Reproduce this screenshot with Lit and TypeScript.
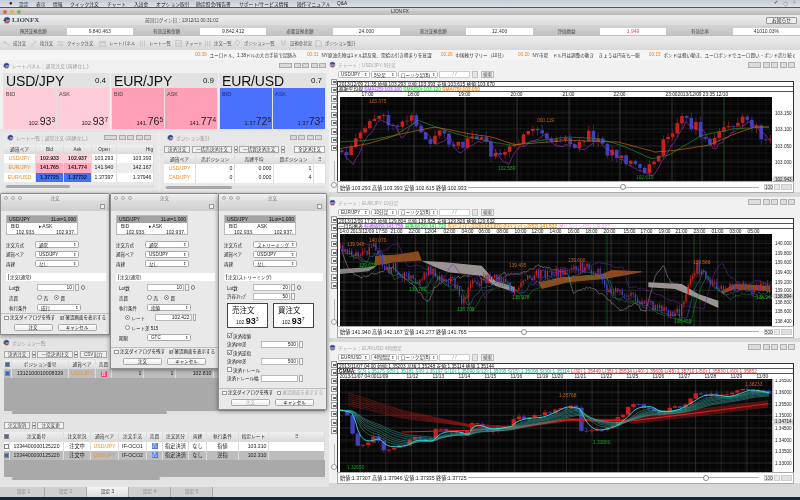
import { LitElement, html, css, svg, nothing } from "lit";
import { customElement } from "lit/decorators.js";

type P = [number, number];
function lerp(pts: P[], x: number): number {
  if (x <= pts[0][0]) return pts[0][1];
  for (let i = 1; i < pts.length; i++) {
    if (x <= pts[i][0]) {
      const [a, b] = pts[i - 1], [c, d] = pts[i];
      return b + ((d - b) * (x - a)) / (c - a);
    }
  }
  return pts[pts.length - 1][1];
}
function rng(seed: number) {
  let s = seed;
  return () => {
    s = (s * 1664525 + 1013904223) >>> 0;
    return s / 4294967296;
  };
}
const conv = (pts: P[], ox: number, oy: number): P[] => pts.map(([x, y]) => [(x - ox) / 3, (y - oy) / 3]);
function line(pts: P[], step: number, noise: number, r: () => number, w: number): string {
  const out: string[] = [];
  const from = pts[0][0], to = Math.min(pts[pts.length - 1][0], w);
  for (let x = from; x <= to; x += step) out.push(`${x.toFixed(1)},${(lerp(pts, x) + (r() - 0.5) * noise).toFixed(1)}`);
  return out.join(" ");
}
function candles(path: P[], w: number, step: number, cw: number, amp: number, wick: number, seed: number) {
  const r = rng(seed);
  let prev = lerp(path, 0);
  const items: unknown[] = [];
  for (let x = 0; x < w; x += step) {
    const close = lerp(path, x + step) + (r() - 0.5) * amp;
    const open = prev;
    const up = close < open;
    const top = Math.min(open, close), bot = Math.max(open, close);
    const col = up ? "#c82020" : "#4040bc";
    items.push(svg`<line x1=${x + cw / 2} x2=${x + cw / 2} y1=${top - r() * wick} y2=${bot + r() * wick} stroke=${col} stroke-width="0.6"/><rect x=${x} y=${top} width=${cw} height=${Math.max(bot - top, 0.8)} fill=${col}/>`);
    prev = close;
  }
  return items;
}

interface ChartSpec {
  h: number;
  info: string;
  ind: unknown;
  dates: [number, string][];
  axis: [number, string][];
  tag: [number, string];
  vlines: [number, string][];
  body: () => unknown;
  ohlc: string;
  knob: number;
  depth: string;
  pair: string;
  tf: string;
  title: string;
  track: number;
}

const C1path = conv([[15,195],[45,225],[70,170],[120,90],[170,110],[190,150],[230,90],[260,130],[295,170],[330,140],[360,195],[400,165],[450,150],[480,205],[510,225],[530,185],[570,160],[620,135],[650,170],[700,165],[740,185],[770,150],[800,175],[840,205],[890,240],[940,260],[980,200],[1040,100],[1100,130],[1125,180],[1190,120],[1230,100],[1270,130],[1305,165]], 15, 35);
const C1g = conv([[15,170],[100,165],[180,150],[250,105],[330,135],[400,155],[470,170],[530,180],[620,165],[700,155],[790,160],[860,180],[950,220],[1000,210],[1100,150],[1200,130],[1305,125]], 15, 35);
const C1o = conv([[15,190],[100,175],[200,145],[300,125],[400,145],[470,155],[540,178],[640,170],[700,165],[850,170],[960,200],[1020,195],[1120,180],[1200,145],[1260,125],[1305,125]], 15, 35);

const t = (x: number, y: number, s: string, c: string) => svg`<text x=${x} y=${y} fill=${c} class="lbl">${s}</text>`;

function chart1() {
  const r = rng(7);
  return svg`
    ${candles(C1path, 432, 4.66, 3.6, 11, 6, 11)}
    <polyline points=${line(C1path.map(([x, y]) => [x + 4, y + 4] as P), 3, 3, r, 432)} fill="none" stroke="#a030d0" stroke-width=".6"/>
    <polyline points=${line(C1g, 3, .3, r, 432)} fill="none" stroke="#1f8f2a" stroke-width=".7"/>
    <polyline points=${line(C1o, 3, .3, r, 432)} fill="none" stroke="#c0641c" stroke-width=".7"/>
    ${t(29, 6, "103.375", "#c8641e")}${t(197, 25, "000.119", "#c8641e")}${t(158, 73, "102.589", "#12a020")}${t(296, 82, "102.619", "#12a020")}`;
}
const C2path = conv([[15,160],[50,170],[80,185],[100,170],[125,155],[150,230],[180,220],[210,240],[260,270],[285,220],[320,260],[360,260],[385,325],[420,270],[470,250],[510,255],[540,290],[570,260],[620,235],[680,240],[730,215],[800,235],[815,290],[870,300],[920,320],[985,345],[1040,360],[1060,280],[1090,215],[1120,260],[1160,290],[1200,270],[1250,285],[1305,280]], 15, 120);
const C2w = conv([[15,160],[40,225],[70,250],[120,240],[170,220],[230,270],[280,325],[300,280],[330,260],[420,240],[470,270],[500,240],[560,240],[610,215],[700,240],[715,295],[760,280],[800,300],[860,350],[900,330],[930,355],[960,250],[985,215],[1010,270],[1060,280]], 15, 120);
const poly = (top: P[], bot: P[], fill: string, ox = 15, oy = 120) =>
  svg`<polygon points=${[...conv(top, ox, oy), ...conv(bot, ox, oy).reverse()].map((p) => p.join(",")).join(" ")} fill=${fill}/>`;
function chart2() {
  const r = rng(21);
  const shift = (dy: number, dx = 0) => C2path.map(([x, y]) => [x + dx, y + dy] as P);
  return svg`
    ${poly([[15,225],[100,220],[120,215]], [[15,240],[100,232],[120,220]], "#8a8280")}
    ${poly([[120,185],[180,182],[250,172],[260,198]], [[120,215],[180,205],[250,200],[260,200]], "#8a4a1c")}
    ${poly([[260,200],[330,205],[440,215],[480,260],[540,280]], [[290,215],[340,235],[440,245],[480,275],[540,295]], "#9a9290")}
    ${poly([[610,265],[680,250],[800,240],[830,228],[920,232]], [[620,285],[700,265],[810,255],[920,235]], "#8a4a1c")}
    ${poly([[940,265],[1040,270],[1090,300],[1150,320]], [[940,280],[1020,285],[1080,310],[1150,342]], "#9a9290")}
    ${poly([[1160,290],[1200,270],[1305,275]], [[1160,300],[1200,285],[1305,292]], "#8a4a1c")}
    <polyline points=${line(C2w, 1.6, 3, r, 432)} fill="none" stroke="#b89cb4" stroke-width=".5"/>
    ${candles(C2path, 432, 2.2, 1.3, 10, 4, 5)}
    <polyline points=${line(shift(5, 5), 2, 4, r, 432)} fill="none" stroke="#3a90d0" stroke-width=".4"/>
    <polyline points=${line(shift(9, 9), 3, 3, r, 432)} fill="none" stroke="#159030" stroke-width=".5"/>
    <polyline points=${line(shift(-4, 22), 3, 3, r, 432)} fill="none" stroke="#7028a8" stroke-width=".5"/>
    ${t(7, 12, "139.946", "#c8641e")}${t(29, 8, "140.070", "#c8641e")}${t(19, 33, "139.635", "#18b02a")}${t(69, 57, "139.786", "#18b02a")}${t(169, 33, "139.495", "#c8641e")}${t(172, 65, "138.978", "#18b02a")}${t(117, 77, "138.709", "#18b02a")}${t(228, 28, "139.600", "#c8641e")}${t(353, 30, "139.566", "#c8641e")}${t(334, 89, "138.455", "#18b02a")}${t(416, 65, "138.942", "#18b02a")}`;
}
const C3path = conv([[15,210],[50,220],[70,320],[130,290],[150,325],[210,315],[240,295],[290,305],[310,270],[370,275],[400,290],[410,240],[460,270],[530,255],[540,235],[620,230],[690,195],[740,210],[745,265],[780,275],[840,255],[880,215],[900,195],[950,200],[970,220],[1030,205],[1100,160],[1180,170],[1240,145],[1300,160]], 15, 116);
function ema(path: P[], n: number) {
  const a = 2 / (n + 1);
  let v = lerp(path, 0);
  const out: string[] = [];
  for (let x = 0; x < 432; x += 3) {
    v = v + a * (lerp(path, x) - v);
    out.push(`${x},${v.toFixed(1)}`);
  }
  return out.join(" ");
}
const C3r = conv([[15,170],[200,222],[400,255],[540,262],[700,238],[800,240],[900,240],[1050,222],[1310,190]], 15, 116);
function chart3() {
  const reds = [];
  for (let k = 0; k < 7; k++) {
    const off = k * 1.9 - 6;
    const pts: string[] = [];
    for (let x = 8; x < 432; x += 4) {
      const sp = Math.max(0.18, 1 - x / 150) * off * 1.15 + (x > 290 ? off * 0.35 : 0);
      pts.push(`${x},${(lerp(C3r, x) + sp).toFixed(1)}`);
    }
    reds.push(svg`<polyline points=${pts.join(" ")} fill="none" stroke="#a31c1c" stroke-width=".5"/>`);
  }
  const teal = [6, 8, 10, 12, 15, 18, 21].map((n) => svg`<polyline points=${ema(C3path, n * 1.4)} fill="none" stroke="#2f9a90" stroke-width=".55"/>`);
  return svg`
    ${candles(C3path, 432, 5.2, 4.4, 5, 3.5, 33)}
    ${reds}
    <polyline points=${conv([[200,275],[400,270],[540,262],[700,238],[800,240],[900,240],[1050,222],[1300,190]], 15, 116).map((p) => p.join(",")).join(" ")} fill="none" stroke="#e01818" stroke-width="1.1"/>
    ${teal}
    <polyline points=${ema(C3path, 4)} fill="none" stroke="#2ee0e0" stroke-width=".9"/>
    ${t(7, 90, "1.32650", "#12a020")}${t(219, 18, "1.35768", "#c8641e")}${t(253, 65, "1.33880", "#12a020")}${t(405, 7, "1.38233", "#c8641e")}`;
}

const SPECS: ChartSpec[] = [
  {
    h: 85, title: "チャート：USD/JPY 5分足", pair: "USD/JPY", tf: "5分足", track: 20,
    info: "2013/12/09 21:35 始値:103.293 高値:103.393 安値:103.615 終値:103.670",
    ind: html`<span>移動平均線</span> <span class="vio">SMA(25):103.100</span> <span class="grn">SMA(50):103.120</span> <span class="org">SMA(75):103.050</span>`,
    dates: [[22, "17:00"], [74, "18:00"], [125, "19:00"], [177, "20:00"], [229, "21:00"], [280, "22:00"], [332, "23:002013/12/09 23:35 12/10"]],
    axis: [[16, "103.150"], [32, "103.100"], [49, "103.050"], [65, "103.000"]], tag: [82, "102.943"],
    vlines: [[22, "#555"], [74, "#555"], [125, "#555"], [177, "#555"], [229, "#555"], [280, "#555"], [332, "#555"], [362, "#555"], [384, "#1f7a28"]],
    body: chart1, ohlc: "始値:103.293 高値:103.393 安値:102.615 終値:102.933", knob: 152, depth: "100",
  },
  {
    h: 92, title: "チャート：EUR/JPY 10分足", pair: "EUR/JPY", tf: "10分足", track: 20,
    info: "2013/12/09 17:20 始値:129.804 高値:139.825 安値:129.826 終値:129.632",
    ind: html`<span>一目均衡表</span> <span class="vio">転換線(9):141.756</span> <span class="grn">基準線(26):141.726</span> <span class="org">先行スパン1(26):141.870 先行スパン2(52):141.522</span> <span class="pnk">遅行スパン(26):139.227</span>`,
    dates: [[0, "14:0 2013/12/09 17:50"], [57, "21:00"], [75, "22:00"], [91, "12/04"], [110, "02:00"], [128, "04:00"], [145, "06:00"], [163, "08:00"], [181, "10:00"], [198, "12:00"], [216, "14:00"], [234, "16:00"], [252, "18:00"], [270, "20:00"], [290, "15:00"], [307, "17:00"], [325, "19:00"], [342, "21:00"], [360, "23:00"], [378, "01:00"], [396, "03:00"], [414, "05:00"]],
    axis: [[9.3, "140.000"], [19.3, "139.800"], [28, "139.600"], [38, "139.400"], [48, "139.200"], [56.6, "139.000"], [68, "138.800"], [77, "138.600"], [87, "138.400"]], tag: [62.3, "138.894"],
    vlines: [...Array.from({ length: 24 }, (_, i) => [i * 17.8 + 4, "#444"] as [number, string]), [87, "#1f7a28"], [267, "#1f7a28"], [354, "#1f7a28"]],
    body: chart2, ohlc: "始値:141.940 高値:142.167 安値:141.277 終値:141.765", knob: 53, depth: "500",
  },
  {
    h: 93, title: "チャート：EUR/USD 4時間足", pair: "EUR/USD", tf: "4時間足", track: 20,
    info: "2013/11/07 04:00 始値:1.35203 高値:1.35248 安値:1.35114 終値:1.35144",
    ind: html`<span class="b">GMMA:</span> <span class="tea">S(3):1.35175 S(5):1.35181 S(8):1.35197 S(10):1.35090 S(12):1.35095 S(15):1.35098 S(30):1.35114</span> <span class="red">L(30):1.35449 L(35):1.35534 L(40):1.35609 L(45):1.35710 L(50):1.35830 L(60):1.35852</span>`,
    dates: [[0, "2013/11/07 04:00"], [43, "11/09"], [73, "11/12"], [99, "11/13"], [125, "11/14"], [151, "11/15"], [177, "11/16"], [203, "11/19"], [218, "11/20"], [241, "11/21"], [267, "11/22"], [293, "11/25"], [319, "11/26"], [345, "11/27"], [371, "11/28"], [397, "11/29"], [423, "11/30"]],
    axis: [[1.5, "1.36500"], [13, "1.36000"], [25, "1.35500"], [36.5, "1.35000"], [49, "1.34500"], [61, "1.34000"], [72, "1.33500"], [84, "1.33000"]], tag: [42.7, "1.34714"],
    vlines: Array.from({ length: 17 }, (_, i) => [i * 25.8 + 20, "#3c3c3c"] as [number, string]),
    body: chart3, ohlc: "始値:1.37307 高値:1.37946 安値:1.37335 終値:1.37725", knob: 235, depth: "100",
  },
];

const logo = html`<svg class="globe" viewBox="0 0 10 10"><circle cx="5" cy="5" r="4" fill="#8b97b8"/><path d="M1 4c2-3 6-3 8 0-2 1-5 1-8 0z" fill="#2d4aa0"/><path d="M2 7c2 1 4 1 6-1l-1 3H3z" fill="#c23a3a"/><path d="M0 6l3-2 1 3z" fill="#3a3a3a"/></svg>`;
const winBtns = (wide = true) => html`<span class="wb">${wide ? html`<i class="w"></i>` : nothing}<i></i><i></i><i></i><i></i></span>`;
const sel = (v: string, cls = "") => html`<span class="sel ${cls}"><span>${v}</span><b>⇕</b></span>`;
const num = (v: string, cls = "") => html`<span class="num"><span class="inp ${cls}">${v}</span><b class="st"></b></span>`;

@customElement("fx-chart")
export class FxChart extends LitElement {
  static properties = { index: { type: Number } };
  index = 0;
  static styles = css`
    :host { display: flex; flex-direction: column; background: #f1f1f1; font-size: 4.8px; }
    .title { height: 10px; display: flex; align-items: center; gap: 2px; padding: 0 5px 0 0; color: #a8a8a8; font-size: 4.8px; }
    .globe { width: 7px; height: 7px; margin-left: 0; }
    .wb { margin-left: auto; display: flex; gap: 1.5px; }
    .wb i { width: 5px; height: 3.5px; background: #dcdcdc; border: .5px solid #b0b0b0; }
    .wb i.w { width: 11px; }
    .bar { height: 10px; display: flex; align-items: center; gap: 1px; padding-left: 9px; }
    .sel { width: 32px; height: 7px; background: #fff; border: .5px solid #bbb; border-radius: 1.5px; display: flex; justify-content: space-between; align-items: center; padding: 0 2px; font-size: 4.6px; color: #333; box-sizing: border-box; white-space: nowrap; }
    .sel.m { width: 26px; }
    .sel.l { width: 40px; }
    .sel b { font-weight: 400; font-size: 4px; }
    .date { width: 31px; height: 7px; background: #fff; border: .5px solid #ccc; text-align: center; font-size: 4.6px; color: #888; box-sizing: border-box; }
    .mini { width: 6px; height: 7px; background: #e4e4e4; border: .5px solid #c0c0c0; box-sizing: border-box; margin-left: 1px; }
    .go { height: 7px; width: 13px; text-align: center; background: #ececec; border: .5px solid #bbb; font-size: 4.6px; color: #555; line-height: 6px; margin-left: 2px; box-sizing: border-box; }
    .mid { display: flex; flex: 1; }
    .tools { width: 9px; flex: none; display: flex; flex-direction: column; align-items: center; gap: 1.8px; padding: 0 0 0 1px; box-sizing: border-box; margin-top: -1px; }
    .tools i { width: 6px; height: 6.5px; background: #f7f7f7; border: .5px solid #999; box-sizing: border-box; position: relative; flex: none; }
    .tools i::after { content: ""; position: absolute; left: 1px; top: 1.5px; width: 3px; height: 2px; background: #666; }
    .tools .track { width: 1px; background: #bbb; margin-top: 8px; flex: none; }
    .tools .knob { width: 6px; height: 6px; border-radius: 50%; background: #fff; border: .5px solid #999; box-sizing: border-box; margin-top: -1px; flex: none; }
    .box { flex: 1; margin: 2px 7px 0 0; display: flex; flex-direction: column; min-width: 0; }
    .frame { outline: .6px solid #333; background: #fff; color: #111; line-height: 5px; }
    .r { height: 5px; padding-left: 1px; white-space: nowrap; overflow: hidden; border-bottom: .5px solid #555; box-sizing: border-box; }
    .vio { color: #a05ae0; background: #f0e0ff; } .grn { color: #20c040; background: #e0ffe0; } .org { color: #e08020; background: #fff0d0; } .pnk { color: #f0a0e0; }
    .tea { color: #20a8a0; } .red { color: #e03030; } .b { font-weight: 700; }
    .dates { position: relative; height: 5px; margin-left: 1.5px; width: 432px; overflow: hidden; }
    .dates span { position: absolute; top: 0; white-space: nowrap; transform: translateX(-6px); }
    .dates span:first-child { transform: none; }
    svg.plot { display: block; margin-left: 1.5px; }
    .lbl { font: 4.8px "Liberation Sans", sans-serif; }
    .ax { font: 4.6px "Liberation Sans", sans-serif; fill: #222; }
    .ctl { height: 10px; display: flex; align-items: center; padding: 0 1px 0 2px; outline: .6px solid #aaa; background: #fff; font-size: 5.2px; color: #222; white-space: nowrap; margin-top: .5px; }
    .sl { flex: 1; height: 1px; background: #aaa; position: relative; margin: 0 5px 0 1px; }
    .sl u { position: absolute; top: -2.5px; width: 6px; height: 6px; border-radius: 50%; background: #fff; border: .5px solid #888; box-sizing: border-box; }
    .dep { width: 9px; height: 6px; border: .5px solid #ccc; text-align: center; line-height: 5px; font-size: 4.5px; box-sizing: border-box; }
    .dn { width: 6px; height: 6px; background: #e8e8e8; border: .5px solid #ccc; box-sizing: border-box; margin-left: 1px; }
    .go2 { width: 11px; height: 6px; background: #e0e0e0; border: .5px solid #ccc; box-sizing: border-box; margin-left: 1px; }
  `;
  render() {
    const s = SPECS[this.index];
    const grid = [];
    for (let y = 7; y < s.h; y += 7) grid.push(svg`<line x1="0" x2="432" y1=${y} y2=${y} stroke="#202020" stroke-width=".5"/>`);
    for (let x = 6; x < 432; x += 7) grid.push(svg`<line y1="0" y2=${s.h} x1=${x} x2=${x} stroke="#1c1c1c" stroke-width=".5"/>`);
    return html`
      <div class="title"><svg class="globe" viewBox="0 0 10 10"><circle cx="5" cy="5" r="4" fill="#8b97b8"/><path d="M1 4c2-3 6-3 8 0-2 1-5 1-8 0z" fill="#2d4aa0"/><path d="M2 7c2 1 4 1 6-1l-1 3H3z" fill="#c23a3a"/></svg><span>${s.title}</span>${winBtns()}</div>
      <div class="bar">${sel(s.pair)}${sel(s.tf, "m")}${sel("ローソク足(B)", "l")}<span class="date">/ /</span><span class="mini"></span><span class="go">検索</span></div>
      <div class="mid">
        <div class="tools">${Array.from({ length: 9 }, () => html`<i></i>`)}<span class="track" style="height:${s.track}px"></span><span class="knob"></span></div>
        <div class="box">
          <div class="frame">
            <div class="r">${s.info}</div>
            <div class="r">${s.ind}</div>
            <div class="dates">${s.dates.map(([x, d]) => html`<span style="left:${x}px">${d}</span>`)}</div>
            <svg class="plot" width="453" height=${s.h} viewBox="0 0 453 ${s.h}">
              <rect width="432" height=${s.h} fill="#060606"/>
              ${grid}
              ${s.vlines.map(([x, c]) => svg`<line x1=${x} x2=${x} y1="0" y2=${s.h} stroke=${c} stroke-width=".6"/>`)}
              ${s.axis.map(([y]) => svg`<line x1="0" x2="432" y1=${y} y2=${y} stroke="#3a3a3a" stroke-width=".5"/>`)}
              <clipPath id="c${this.index}"><rect width="432" height=${s.h}/></clipPath>
              <g clip-path="url(#c${this.index})">${s.body()}</g>
              ${s.axis.map(([y, l]) => svg`<text class="ax" x="435" y=${y + 1.7}>${l}</text>`)}
              <path d=${`M432 ${s.tag[0]}l2 -3h19v6h-19z`} fill="#d8d8d8"/>
              <text class="ax" x="435" y=${s.tag[0] + 1.7}>${s.tag[1]}</text>
            </svg>
          </div>
          <div class="ctl"><span>${s.ohlc}</span><span class="sl"><u style="left:${s.knob}px"></u></span><span class="dep">${s.depth}</span><span class="dn"></span><span class="go2"></span></div>
        </div>
      </div>`;
  }
}

@customElement("order-win")
export class OrderWin extends LitElement {
  static properties = { kind: { type: Number } };
  kind = 0;
  static styles = css`
    :host { display: flex; flex-direction: column; background: #e9e9e9; border: .6px solid #8c8c8c; border-radius: 2px 2px 0 0; box-shadow: 0 1px 4px rgba(0,0,0,.45); font-size: 4.5px; color: #222; box-sizing: border-box; overflow: hidden; }
    .tt { height: 8px; flex: none; display: flex; align-items: center; justify-content: center; position: relative; background: linear-gradient(#f0f0f0, #dcdcdc); color: #777; font-size: 4.6px; }
    .dots { position: absolute; left: 3px; top: 2px; display: flex; gap: 3px; }
    .dots i { width: 4px; height: 4px; border-radius: 50%; border: .5px solid #aaa; box-sizing: border-box; background: #e8e8e8; }
    .tb { height: 9px; flex: none; display: flex; justify-content: flex-end; align-items: center; padding-right: 4px; background: linear-gradient(#dcdcdc, #cfcfcf); }
    .tb i { width: 5px; height: 5px; background: #eee; border: .5px solid #999; box-sizing: border-box; }
    .main { flex: 1; display: flex; flex-direction: column; padding: 4px 3px 0 5px; min-height: 0; }
    .info { width: 72px; height: 20px; background: #fff; border: .5px solid #bbb; box-sizing: border-box; flex: none; font-size: 5px; }
    .ih { height: 7px; background: #a4a4a4; display: flex; justify-content: space-between; padding: 0 1px 0 2px; line-height: 7px; color: #111; }
    .ir { padding: 0 4px; line-height: 6px; display: flex; gap: 20px; height: 6px; }
    .ir.v { justify-content: space-between; padding: 0 2px 0 9px; }
    .ir.v span::after { content: "↓"; color: #e04060; font-size: 3.6px; }
    .rows { display: flex; flex-direction: column; margin-top: 6px; gap: 2.5px; flex: none; }
    .row { display: flex; align-items: center; height: 7px; flex: none; white-space: nowrap; }
    .row > label { width: 29px; flex: none; white-space: nowrap; }
    .sel { width: 44px; height: 7px; background: #fff; border: .5px solid #aaa; border-radius: 1.5px; display: flex; justify-content: space-between; align-items: center; padding: 0 2px 0 3px; box-sizing: border-box; font-size: 4.6px; }
    .sel b { font-weight: 400; font-size: 4px; }
    .sect { margin-top: 5.5px; height: 8px; flex: none; background: #fff; display: flex; align-items: center; padding-left: 2px; }
    .sect::before { content: ""; width: 1px; height: 6px; background: #888; margin-right: 1px; }
    .form { padding-left: 3px; display: flex; flex-direction: column; gap: 3px; margin-top: 3.5px; flex: none; }
    .form .row > label { width: 28px; }
    .num { display: flex; align-items: center; gap: 1px; }
    .inp { width: 37px; height: 7px; background: #fff; border: .5px solid #bbb; box-sizing: border-box; text-align: right; padding-right: 1px; line-height: 6px; font-size: 4.9px; }
    .st { width: 3.5px; height: 7px; background: #f4f4f4; border: .5px solid #aaa; box-sizing: border-box; display: block; }
    .go { width: 4.5px; height: 4.5px; border: .5px solid #888; border-radius: 50%; margin-left: 1px; box-sizing: border-box; }
    .rd { width: 5px; height: 5px; border-radius: 50%; border: .5px solid #888; box-sizing: border-box; background: #fff; display: inline-block; margin: 0 1.5px 0 6px; position: relative; flex: none; }
    .rd.nm { margin-left: 0; }
    .rd.on::after { content: ""; position: absolute; inset: 1.2px; background: #444; border-radius: 50%; }
    .ck { width: 4.5px; height: 4.5px; border: .5px solid #999; background: #fff; box-sizing: border-box; display: inline-block; margin-right: 1.5px; position: relative; flex: none; }
    .ck.on::after { content: "✓"; position: absolute; left: 0; top: -2.5px; font-size: 6px; line-height: 7px; color: #222; }
    .rl { width: 23px; flex: none; }
    .foot { flex: none; height: 21px; padding: 1px 3px 0; box-sizing: border-box; border-top: .5px solid #c0c0c0; }
    .cks { display: flex; justify-content: space-between; white-space: nowrap; height: 6px; line-height: 6px; }
    .cks span { display: flex; align-items: center; }
    .dim { color: #aaa; }
    .btns { display: flex; justify-content: center; gap: 5px; margin-top: 3px; }
    .btns span { width: 39px; height: 7px; background: linear-gradient(#fff, #ececec); border: .5px solid #aaa; border-radius: 1.5px; text-align: center; line-height: 6px; box-sizing: border-box; }
    .big { display: flex; gap: 5px; margin: 2px 0 2.5px 0; height: 25px; flex: none; }
    .pb { width: 41px; height: 25px; background: #fff; border: 1px solid #444; box-sizing: border-box; padding: 2px 0 0 4px; font-size: 7.5px; color: #111; line-height: 10px; }
    .pb div { font-size: 5px; padding-left: 4px; white-space: nowrap; }
    .pb b { font-size: 9px; } .pb sup { font-size: 5px; line-height: 0; }
    .s3 { gap: 1.5px; }
    .s3 .row > label { width: 34px; }
    .s3 .row > label.sh { width: 26px; }
  `;
  info(arrow: boolean) {
    return html`<div class="info"><div class="ih"><span>USD/JPY</span><span>1Lot=1,000</span></div>
      <div class="ir"><span>BID</span><span>${arrow ? "▸" : " "}ASK</span></div>
      <div class="ir v"><span>102.933</span><span>102.937</span></div></div>`;
  }
  render() {
    const k = this.kind;
    return html`
      <div class="tt"><span class="dots"><i></i><i></i><i></i></span>注文</div>
      <div class="tb"><i></i></div>
      <div class="main">
        ${this.info(k !== 2)}
        <div class="rows">
          <div class="row"><label>注文方式</label>${sel(k === 2 ? "ストリーミング" : "通常")}</div>
          <div class="row"><label>通貨ペア</label>${sel("USD/JPY")}</div>
          <div class="row"><label>両建</label>${sel("なし")}</div>
        </div>
        <div class="sect">${k === 2 ? "注文(ストリーミング)" : "注文(通常)"}</div>
        ${k === 0 ? html`<div class="form">
            <div class="row"><label>Lot数</label><span class="num"><span class="inp">10</span><b class="st"></b><i class="go"></i></span></div>
            <div class="row"><label>売買</label><i class="rd nm"></i>売<i class="rd on"></i>買</div>
            <div class="row"><label>執行条件</label>${sel("成行")}</div></div>` : nothing}
        ${k === 1 ? html`<div class="form">
            <div class="row"><label>Lot数</label><span class="num"><span class="inp">10</span><b class="st"></b><i class="go"></i></span></div>
            <div class="row"><label>売買</label><i class="rd nm"></i>売<i class="rd on"></i>買</div>
            <div class="row"><label>執行条件</label>${sel("指値")}</div>
            <div class="row"><i class="rd on"></i><span class="rl">レート</span>${num("102.422")}</div>
            <div class="row"><i class="rd"></i><span class="rl">レート差 515</span></div>
            <div class="row"><label>期限</label>${sel("GTC")}</div></div>` : nothing}
        ${k === 2 ? html`<div class="form s3">
            <div class="row"><label class="sh">Lot数</label><span class="num"><span class="inp">20</span><b class="st"></b><i class="go"></i></span></div>
            <div class="row"><label class="sh">許容ｽﾘｯﾌﾟ</label>${num("50")}</div>
            <div class="big">
              <div class="pb">売注文<div>102.<b>93</b><sup>3</sup></div></div>
              <div class="pb">買注文<div>102.<b>93</b><sup>7</sup></div></div>
            </div>
            <div class="row"><i class="ck on"></i>決済指値</div>
            <div class="row"><label>決済pip差</label>${num("500")}</div>
            <div class="row"><i class="ck on"></i>決済逆指</div>
            <div class="row"><label>決済pip差</label>${num("500")}</div>
            <div class="row"><i class="ck"></i>決済トレール</div>
            <div class="row"><label>決済トレール幅</label>${num("")}</div></div>` : nothing}
      </div>
      <div class="foot">
        <div class="cks"><span><i class="ck"></i>注文ダイアログを残す</span><span class=${k === 2 ? "dim" : ""}><i class="ck ${k === 2 ? "" : "on"}"></i>確認画面を表示する</span></div>
        <div class="btns"><span class=${k === 2 ? "dim" : ""}>注文</span><span>キャンセル</span></div>
      </div>`;
  }
}

const tbIcon = (d: string) => html`<svg class="ti" viewBox="0 0 10 10"><path d=${d} fill="none" stroke="#a8a8a8" stroke-width="1.1"/><path d=${d} fill="none" stroke="#fff" stroke-width=".4"/></svg>`;
const TOOLS: [string, string, number][] = [
  ["M1 2l4 2 4 4M1 2l2 4", "成注文", 27],
  ["M9 1L4 6 2 9M6 1l3 3", "指注文", 27],
  ["M1 3h8M1 7h8M3 1v2M7 7v2", "クイック注文", 42],
  ["M1 2h8v7H1zM1 4h8", "レートパネル", 40],
  ["M2 1v8M5 1v8M8 1v8", "レート一覧", 36],
  ["M1 1h8v8H1zM2 7l2-2 2 1 3-3", "チャート", 29],
  ["M2 1v8M5 1v8M8 1v8", "注文一覧", 30],
  ["M5 1a3 3 0 1 1-.1 0M5 7v2", "ポジション一覧", 46],
  ["M2 1l3 2 3-2-1 5H3zM5 6v3", "証拠金状況", 35],
  ["M1 1h6l2 2v6H1z", "ポジション集計", 44],
];
const NEWS: [string, string, number][] = [
  ["00:39", "ユーロドル、1.38ドルの大台手前で足踏み", 112],
  ["00:31", "NY原油先物は1ドル超反発、需給の引き締まりを意識", 134],
  ["00:26", "中国株サマリー（10日）", 77],
  ["00:20", "NY市場　ドル円は調整の動き　きょうは円安も一服", 131],
  ["00:15", "ポンドは軽い動き、ユーロポンドでユーロ買い・ポンド売り続く", 150],
];
const MENU: [string, number][] = [["設定", 17], ["表示", 17], ["情報", 17], ["クイック注文", 37], ["チャート", 27], ["入出金", 22], ["オプション取引", 40], ["勘定照会/報告書", 43], ["サポート/サービス情報", 58], ["操作マニュアル", 40], ["Q&A", 14]];
const SUM: [string, string, string?][] = [["預託証拠金額", "9,840,463"], ["有効証拠金額", "9,842,412"], ["必要証拠金額", "24,000"], ["発注証拠金額", "12,400"], ["評価損益", "1,949", "pink"], ["有効比率", "41010.03%"]];

@customElement("app-root")
export class AppRoot extends LitElement {
  static styles = css`
    :host { display: block; width: 800px; height: 500px; overflow: hidden; position: relative; background: #c9c9c9; font-family: "Liberation Sans", "Noto Sans CJK JP", sans-serif; font-size: 5px; color: #222; filter: blur(.35px); }
    .menu { height: 8px; box-sizing: border-box; display: flex; align-items: center; background: linear-gradient(#c3cbd8, #dde1e8); border-bottom: 1px solid #555; font-size: 4.8px; color: #222; padding-left: 19px; }
    .menu span { flex: none; white-space: nowrap; }
    .menu .st { margin-left: auto; display: flex; gap: 5px; padding-right: 4px; color: #555; }
    .apple { position: absolute; left: 9px; top: 0; font-size: 6px; line-height: 7px; color: #222; }
    .titleb { height: 7px; background: linear-gradient(#dadada, #b8b8b8); display: flex; align-items: center; justify-content: center; color: #333; font-size: 4.6px; position: relative; }
    .lights { position: absolute; left: 3px; top: 1.5px; display: flex; gap: 3.2px; }
    .lights i { width: 4px; height: 4px; border-radius: 50%; }
    .hdr { height: 10px; background: linear-gradient(#ededed, #dcdcdc); display: flex; align-items: center; position: relative; }
    .lg { display: flex; align-items: center; padding-left: 3px; gap: 1px; font: 700 7px "Liberation Serif", serif; color: #3b4a66; width: 142px; flex: none; }
    .lg .globe { width: 8px; height: 8px; }
    .login { flex: 1; color: #444; font-size: 4.6px; }
    .notice { width: 31px; height: 7px; margin-right: 3px; background: #eee; border: .5px solid #999; border-radius: 1px; font-size: 4.8px; text-align: center; line-height: 6px; box-sizing: border-box; }
    .sum { height: 11px; display: grid; grid-template-columns: repeat(6, 1fr); background: linear-gradient(#d4d4d4, #c0c0c0); align-items: center; padding-top: 1px; box-sizing: border-box; }
    .sum > div { display: grid; grid-template-columns: 66.5px 66.5px; align-items: center; text-align: center; font-size: 4.5px; color: #444; }
    .sum em { font-style: normal; background: #fff; height: 7px; line-height: 7px; color: #333; font-size: 5px; }
    .sum em.pink { color: #ee4488; }
    .tools { height: 14px; background: linear-gradient(#ececec, #d8d8d8); display: flex; align-items: center; padding-left: 2.5px; color: #555; font-size: 4.4px; }
    .tools div { display: flex; align-items: center; gap: 3.5px; flex: none; white-space: nowrap; }
    .ti { width: 7px; height: 7px; flex: none; }
    .news { height: 10px; background: #f5f5f5; display: flex; align-items: center; padding-left: 195px; font-size: 4.6px; color: #333; white-space: nowrap; overflow: hidden; }
    .news div { flex: none; display: flex; gap: 3px; overflow: hidden; }
    .news b { color: #e8862a; font-weight: 400; }
    .main { height: 427px; display: grid; grid-template-columns: 329px 1fr; background: #e4e4e4; position: relative; }
    .col { display: flex; flex-direction: column; }
    .ph { height: 11px; display: flex; align-items: center; gap: 2px; padding: 0 3px; color: #999; font-size: 4.8px; flex: none; }
    .ph .globe { width: 7px; height: 7px; }
    .wb { margin-left: auto; display: flex; gap: 1.5px; }
    .wb i { width: 5px; height: 3.5px; background: #d8d8d8; border: .5px solid #aaa; }
    .wb i.w { width: 11px; }
    .rate { background: #f0f0f0; height: 69px; flex: none; }
    .cards { display: grid; grid-template-columns: 107px 107px 107px; gap: 0 1px; padding: 2px 3px 0 3px; height: 58px; box-sizing: border-box; }
    .card { display: flex; flex-direction: column; background: #e2e2e2; padding: 0 0 0 1px; }
    .ch { height: 15px; flex: none; display: flex; justify-content: space-between; align-items: center; padding: 0 4px 0 2px; font-size: 14px; color: #111; letter-spacing: -.15px; }
    .ch small { font-size: 8px; letter-spacing: 0; }
    .two { flex: 1; display: grid; grid-template-columns: 52px 52px; gap: 1px; }
    .pr { display: flex; flex-direction: column; justify-content: space-between; padding: 3px 1px 1px 2px; font-size: 5.5px; color: #444; }
    .pr.a { background: #ffcdd8; } .pr.b { background: #ff9fb6; } .pr.c { background: #4a71fb; color: #173080; }
    .val { text-align: right; color: #222; font-size: 5.8px; white-space: nowrap; line-height: 9px; }
    .val b { font-weight: 400; font-size: 10.5px; }
    .val sup { font-size: 6.5px; line-height: 0; vertical-align: 3.5px; }
    .two2 { display: grid; grid-template-columns: 158px 1fr; height: 60px; margin-top: 3px; flex: none; background: #ececec; gap: 2px; }
    .lst { padding: 0 4px; display: flex; flex-direction: column; background: #e8e8e8; min-width: 0; }
    .lst1 .g { margin-top: 2px; }
    .g { display: grid; background: #fff; align-items: stretch; font-size: 5.2px; grid-auto-rows: 9.2px; flex: none; }
    .g > span { white-space: nowrap; overflow: hidden; line-height: 9px; text-align: center; border-right: .5px solid #ddd; box-sizing: border-box; }
    .g .h { background: linear-gradient(#f0f0f0, #d9d9d9); color: #333; font-size: 4.7px; }
    .g .hr { text-align: right; }
    .rt { grid-template-columns: 32px 28px 28px 25px 37px; }
    .ps { grid-template-columns: 32px 39px 39px 40px 12px; }
    .pos { grid-template-columns: 8px 57px 27px 16px 32px 32px 38px 1fr; }
    .ord { grid-template-columns: 6px 54px 27px 28px 28px 16px 26px 18px 32px 30px 1fr; margin-top: 2px; }
    .us { color: #e8902a; }
    .n { text-align: right !important; padding-right: 1.5px; }
    .f { background: #ffd2da; font-weight: 700; } .f2 { background: #ffa9bd; font-weight: 700; } .f3 { background: #4472ee; font-weight: 700; color: #0c1a40; }
    .alt { background: #ededed; }
    .sb { height: 3px; background: #e0e0e0; margin-top: 3px; position: relative; flex: none; }
    .sb.z { margin-top: 0; }
    .sb i { position: absolute; left: 2px; top: 0; height: 3px; border-radius: 2px; background: #a8a8a8; }
    .btn { height: 7px; background: #f0f0f0; border: .5px solid #aaa; padding: 0 3px; line-height: 6px; font-size: 4.6px; color: #444; box-sizing: border-box; flex: none; white-space: nowrap; }
    .btn.strong { margin-left: auto; background: #fff; color: #222; }
    .tr { display: flex; gap: 1.5px; align-items: center; height: 9px; flex: none; }
    .tr.t2 { height: 12px; }
    .tr.t3 { margin-top: 6px; height: 10px; }
    .tri { width: 4px; padding: 0; text-align: center; font-size: 3.5px; }
    .fill { background: #a9a9a9; flex: none; }
    .f1 { height: 33px; } .fo { height: 17px; }
    .chk { width: 5px; height: 5px; background: #fff; border: .5px solid #888; box-sizing: border-box; display: inline-block; margin: 2px 0 0; vertical-align: top; }
    .chk.on { background: #3a66c8; }
    .ba { display: inline-block; width: 6px; height: 6px; line-height: 6px; color: #fff; font-size: 4.6px; margin-top: 1.5px; vertical-align: top; font-style: normal; }
    .ba.p { background: #ee3a78; } .ba.u { background: #4a78e8; }
    .g .sel2 { background: #bdbdbd; }
    .g .sel2.us { color: #e8902a; }
    .poswrap { display: flex; flex-direction: column; padding: 0 4px; margin-top: 145px; flex: none; }
    .phm { margin: 0 -4px; }
    .win { position: absolute; top: 133px; }
    .w1 { left: 0; width: 110px; height: 142px; z-index: 1; }
    .w2 { left: 110px; width: 109px; height: 176px; z-index: 2; }
    .w3 { left: 218px; width: 109px; height: 217px; z-index: 3; }
    .tabs { height: 10px; display: flex; padding-left: 3px; background: #cfcfcf; align-items: stretch; font-size: 4.8px; color: #888; }
    .tabs span { width: 42px; text-align: center; line-height: 10px; border-right: .5px solid #aaa; box-sizing: border-box; }
    .tabs .on { background: linear-gradient(#f4f4f4, #dedede); color: #333; }
    .tabs .rest { flex: 1; background: #d9d9d9; border: 0; }
    .desk { height: 3px; background: #0e2742; }
    .rc { display: flex; flex-direction: column; background: #d8d8d8; }
    .rc fx-chart { flex: none; }
    .c1 { height: 132px; } .c2 { height: 141px; margin-top: 5px; } .c3 { height: 141px; margin-top: 4px; }
  `;
  card(p: string, sp: string, cls: string, bid: string[], ask: string[]) {
    const v = (a: string[]) => html`<div class="val">${a[0]}<b>${a[1]}</b><sup>${a[2]}</sup></div>`;
    return html`<div class="card"><div class="ch"><span>${p}</span><small>${sp}</small></div>
      <div class="two"><div class="pr ${cls}"><span>BID</span>${v(bid)}</div><div class="pr ${cls}"><span>ASK</span>${v(ask)}</div></div></div>`;
  }
  render() {
    return html`
      <div class="menu"><span class="apple">●</span>${MENU.map(([m, w]) => html`<span style="width:${w}px">${m}</span>`)}<span class="st"><span>✔</span><span>♡</span><span>⌾</span></span></div>
      <div class="titleb"><span class="lights"><i style="background:#e8604f"></i><i style="background:#e6b33c"></i><i style="background:#7fb84a"></i></span>LION FX</div>
      <div class="hdr"><div class="lg">${logo}LIONFX</div><span class="login">前回ログイン日：13/12/11 00:31:02</span><span class="notice">お知らせ</span></div>
      <div class="sum">${SUM.map(([l, v, c]) => html`<div><span>${l}</span><em class=${c ?? ""}>${v}</em></div>`)}</div>
      <div class="tools">${TOOLS.map(([d, l, w]) => html`<div style="width:${w}px">${tbIcon(d)}<span>${l}</span></div>`)}</div>
      <div class="news">${NEWS.map(([a, b, w]) => html`<div style="width:${w}px"><b>${a}</b><span>${b}</span></div>`)}</div>
      <div class="main">
        <div class="col">
          <div class="rate">
            <div class="ph">${logo}<span>レートパネル：通常注文 (両建なし)</span>${winBtns()}</div>
            <div class="cards">
              ${this.card("USD/JPY", "0.4", "a", ["102.", "93", "3"], ["102.", "93", "7"])}
              ${this.card("EUR/JPY", "0.9", "b", ["141.", "76", "5"], ["141.", "77", "4"])}
              ${this.card("EUR/USD", "0.7", "c", ["1.37", "72", "5"], ["1.37", "73", "2"])}
            </div>
          </div>
          <div class="two2">
            <div class="lst lst1">
              <div class="ph">${logo}<span>レート一覧：通常注文 (両建なし)</span>${winBtns()}</div>
              <div class="g rt">
                <span class="h">通貨ペア</span><span class="h">Bid</span><span class="h">Ask</span><span class="h">Open</span><span class="h hr">Hig</span>
                <span class="us">USD/JPY</span><span class="f">102.933</span><span class="f">102.937</span><span>103.293</span><span class="n">103.393</span>
                <span class="us alt">EUR/JPY</span><span class="f2">141.765</span><span class="f2">141.774</span><span class="alt">141.940</span><span class="n alt">142.167</span>
                <span class="us">EUR/USD</span><span class="f3">1.37725</span><span class="f3">1.37732</span><span>1.37397</span><span class="n">1.37946</span>
              </div>
              <div class="sb"><i style="width:64px"></i></div>
            </div>
            <div class="lst">
              <div class="ph">${logo}<span>ポジション集計</span>${winBtns(false)}</div>
              <div class="tr t2"><span class="btn">決済注文</span><span class="btn">一括売決済注文</span><span class="btn tri">▾</span><span class="btn">一括買決済注文</span><span class="btn tri">▾</span><span class="btn strong">全決済注文</span></div>
              <div class="g ps">
                <span class="h">通貨ペア</span><span class="h">売ポジション</span><span class="h">売建平均</span><span class="h">買ポジション</span><span class="h">⠿</span>
                <span class="us">USD/JPY</span><span class="n">0</span><span class="n">0.000</span><span class="n">1</span><span></span>
                <span class="us">CAD/JPY</span><span class="n">0</span><span class="n">0.000</span><span class="n">4</span><span></span>
              </div>
              <div class="sb"><i style="width:66px"></i></div>
            </div>
          </div>
          <div class="poswrap">
            <div class="ph phm">${logo}<span>ポジション一覧</span></div>
            <div class="tr t2"><span class="btn">決済注文</span><span class="btn tri">▾</span><span class="btn">一括決済注文</span><span class="btn tri">▾</span><span class="btn">CSV出力</span></div>
            <div class="g pos">
              <span class="h"><i class="chk on"></i></span><span class="h">ポジション番号</span><span class="h">通貨ペア</span><span class="h">売買</span><span class="h"></span><span class="h"></span><span class="h"></span><span class="h"></span>
              <span class="sel2"><i class="chk on"></i></span><span class="sel2">1312100010008339</span><span class="sel2 us">USD/JPY</span><span class="sel2"><i class="ba p">買</i></span><span class="sel2 n">1</span><span class="sel2 n">1</span><span class="sel2 n">102.810</span><span class="sel2"></span>
            </div>
            <div class="fill f1"></div>
            <div class="sb z"><i style="width:155px;left:8px"></i></div>
            <div class="tr t3"><span class="btn">注文取消</span><span class="btn tri">▾</span><span class="btn">注文変更</span></div>
            <div class="g ord">
              <span class="h"><i class="chk on"></i></span><span class="h">注文番号</span><span class="h">注文状況</span><span class="h">通貨ペア</span><span class="h">注文手法</span><span class="h">売買</span><span class="h">注文区分</span><span class="h">両建</span><span class="h">執行条件</span><span class="h">指定レート</span><span class="h">⠿</span>
              <span><i class="chk"></i></span><span>1334400000125220</span><span>注文中</span><span class="us">USD/JPY</span><span>IF-OCO1</span><span><i class="ba u">売</i></span><span>指定決済</span><span>なし</span><span>指値</span><span class="n">103.310</span><span></span>
              <span class="sel2"><i class="chk on"></i></span><span class="sel2">1334400000125220</span><span class="sel2">注文中</span><span class="sel2 us">USD/JPY</span><span class="sel2">IF-OCO2</span><span class="sel2"><i class="ba u">売</i></span><span class="sel2">指定決済</span><span class="sel2">なし</span><span class="sel2">逆指</span><span class="sel2 n">102.310</span><span class="sel2"></span>
            </div>
            <div class="fill fo"></div>
            <div class="sb z"><i style="width:148px;left:8px"></i></div>
          </div>
        </div>
        <div class="rc">
          <fx-chart class="c1" index="0"></fx-chart>
          <fx-chart class="c2" index="1"></fx-chart>
          <fx-chart class="c3" index="2"></fx-chart>
        </div>
        <order-win class="win w1" kind="0"></order-win>
        <order-win class="win w2" kind="1"></order-win>
        <order-win class="win w3" kind="2"></order-win>
      </div>
      <div class="tabs"><span>設定 1</span><span>設定 2</span><span class="on">設定 3</span><span>設定 4</span><span>設定 5</span><span class="rest"></span></div>
      <div class="desk"></div>`;
  }
}
